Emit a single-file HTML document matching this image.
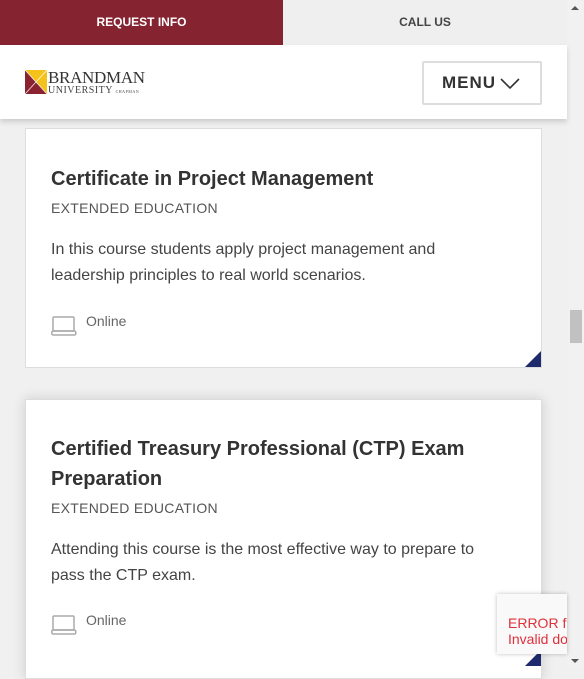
<!DOCTYPE html>
<html><head><style>
*{margin:0;padding:0;box-sizing:border-box}
body{width:584px;height:668px;overflow:hidden;background:#f0f0f0;font-family:"Liberation Sans",sans-serif;position:relative;color:#333}
.top{position:absolute;top:0;left:0;width:567px;height:45px;background:#efefef}
.req{position:absolute;left:0;top:0;width:283px;height:45px;background:#852331;color:#fff;font-weight:bold;font-size:12px;text-align:center;line-height:44px}
.call{position:absolute;left:283px;top:0;width:284px;height:45px;color:#444;font-weight:bold;font-size:12px;text-align:center;line-height:45px}
.hdr{position:absolute;top:45px;left:0;width:567px;height:74px;background:#fff;box-shadow:0 3px 5px rgba(0,0,0,.15);z-index:2}
.menu{position:absolute;left:422px;top:16px;width:120px;height:44px;border:2px solid #ddd;border-radius:2px;font-weight:bold;font-size:17px;letter-spacing:1px;color:#333;line-height:40px;padding-left:18px}
.sb{position:absolute;right:0;top:0;width:17px;height:668px;background:#f1f1f1}
.thumb{position:absolute;left:570px;top:310px;width:12px;height:33px;background:#c1c1c1}
.card{position:absolute;left:25px;width:517px;background:#fff;border:1px solid #ddd;padding-left:25px}
.card h2{font-size:20px;font-weight:bold;line-height:30px;color:#333}
.card .ee{font-size:14px;color:#555;letter-spacing:.3px;margin-top:6px}
.card p{font-size:16px;line-height:26px;color:#444;margin-top:21px;width:430px}
.on{position:absolute;left:25px;font-size:14px;color:#666}
.on span{position:absolute;left:35px;top:-2px}
.tri{position:absolute;right:0;bottom:0;width:0;height:0;border-left:16px solid transparent;border-bottom:16px solid #1e2a6b}
.err{position:absolute;left:497px;top:594px;width:70px;height:60px;background:#f9f9f9;box-shadow:0 0 4px rgba(0,0,0,.25);color:#e0303a;font-size:14px;padding:21px 0 0 11px;line-height:16px;white-space:nowrap;overflow:hidden;z-index:3}
</style></head><body>
<div class="top"><div class="req">REQUEST INFO</div><div class="call">CALL US</div></div>
<div class="hdr">
<svg style="position:absolute;left:25px;top:25px" width="22" height="24" viewBox="0 0 22 24"><rect width="22" height="24" fill="#f4c21b"/><polygon points="0,0 11,12 0,24" fill="#8a2232"/><polygon points="0,24 11,12 22,24" fill="#8a2232"/><line x1="0" y1="0" x2="22" y2="24" stroke="#fff" stroke-width=".7"/><line x1="22" y1="0" x2="0" y2="24" stroke="#fff" stroke-width=".7"/></svg>
<div style="position:absolute;left:48px;top:23px;font-family:'Liberation Serif',serif;font-size:17px;color:#333;letter-spacing:-.3px">BRANDMAN</div>
<div style="position:absolute;left:48px;top:40px;font-family:'Liberation Serif',serif;font-size:10px;color:#444;letter-spacing:.5px">UNIVERSITY <span style="font-size:4px">CHAPMAN</span></div>
<div class="menu">MENU<svg style="position:absolute;left:76px;top:15px" width="20" height="12" viewBox="0 0 20 12"><polyline points="1,1 10,10 19,1" fill="none" stroke="#333" stroke-width="1.6"/></svg></div>
</div>
<div class="card" style="top:128px;height:240px;padding-top:35px">
<h2>Certificate in Project Management</h2>
<div class="ee">EXTENDED EDUCATION</div>
<p>In this course students apply project management and leadership principles to real world scenarios.</p>
<div class="on" style="top:186px"><svg width="26" height="22" viewBox="0 0 26 22"><rect x="2" y="2" width="21" height="14" rx="1" fill="none" stroke="#aaa" stroke-width="1.5"/><rect x="0.8" y="16" width="24" height="4" rx="1.5" fill="none" stroke="#aaa" stroke-width="1.5"/></svg><span>Online</span></div>
<div class="tri"></div>
</div>
<div class="card" style="top:399px;height:280px;padding-top:34px;box-shadow:0 0 12px rgba(0,0,0,.15)">
<h2>Certified Treasury Professional (CTP) Exam Preparation</h2>
<div class="ee">EXTENDED EDUCATION</div>
<p>Attending this course is the most effective way to prepare to pass the CTP exam.</p>
<div class="on" style="top:214px"><svg width="26" height="22" viewBox="0 0 26 22"><rect x="2" y="2" width="21" height="14" rx="1" fill="none" stroke="#aaa" stroke-width="1.5"/><rect x="0.8" y="16" width="24" height="4" rx="1.5" fill="none" stroke="#aaa" stroke-width="1.5"/></svg><span>Online</span></div>
<div class="tri" style="bottom:12px"></div>
</div>
<div class="err">ERROR for<br>Invalid do</div>
<div class="sb"></div><div class="thumb"></div>
<div style="position:absolute;left:571px;top:6px;border:4px solid transparent;border-bottom:4px solid #555;border-top:0"></div>
<div style="position:absolute;left:571px;top:659px;border:4px solid transparent;border-top:4px solid #555;border-bottom:0"></div>
</body></html>
